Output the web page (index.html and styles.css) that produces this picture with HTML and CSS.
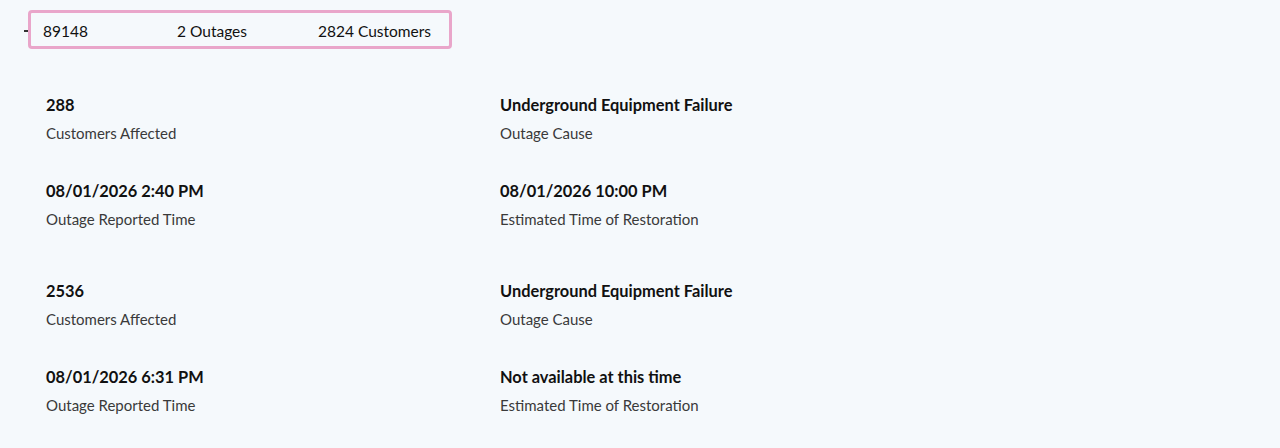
FILE: index.html
```html
<!DOCTYPE html>
<html>
<head>
<meta charset="utf-8">
<link rel="stylesheet" href="styles.css">
</head>
<body>
<div class="page">
  <div class="summary-row">
    <span class="toggle" aria-label="collapse"></span>
    <div class="summary">
      <span class="s-id">89148</span>
      <span class="s-outages">2 Outages</span>
      <span class="s-cust">2824 Customers</span>
    </div>
  </div>
  <div class="outage">
    <div class="grid">
      <div class="item"><div class="val">288</div><div class="lbl">Customers Affected</div></div>
      <div class="item"><div class="val">Underground Equipment Failure</div><div class="lbl">Outage Cause</div></div>
      <div class="item"><div class="val">08/01/2026 2:40 PM</div><div class="lbl">Outage Reported Time</div></div>
      <div class="item"><div class="val">08/01/2026 10:00 PM</div><div class="lbl">Estimated Time of Restoration</div></div>
    </div>
  </div>
  <div class="outage">
    <div class="grid">
      <div class="item"><div class="val">2536</div><div class="lbl">Customers Affected</div></div>
      <div class="item"><div class="val">Underground Equipment Failure</div><div class="lbl">Outage Cause</div></div>
      <div class="item"><div class="val">08/01/2026 6:31 PM</div><div class="lbl">Outage Reported Time</div></div>
      <div class="item"><div class="val">Not available at this time</div><div class="lbl">Estimated Time of Restoration</div></div>
    </div>
  </div>
</div>
</body>
</html>
```
FILE: styles.css
```css
html, body {
  margin: 0;
  padding: 0;
  background: #f5f9fc;
}
body {
  font-family: Lato, "Liberation Sans", sans-serif;
  color: #111;
}
.page {
  padding: 10px 0 0 24px;
}
.summary-row {
  display: flex;
  align-items: center;
}
.toggle {
  width: 4px;
  height: 2px;
  margin-top: 3px;
  background: #333;
}
.summary {
  display: flex;
  align-items: center;
  width: 418px;
  height: 31px;
  padding-top: 2px;
  border: 3px solid #e9a6ca;
  border-radius: 4px;
  font-size: 15.5px;
  color: #111;
}
.s-id { margin-left: 12px; width: 134px; }
.s-outages { width: 141px; }
.outage {
  padding: 46px 0 0 22px;
}
.outage + .outage {
  padding-top: 52px;
}
.grid {
  display: grid;
  grid-template-columns: 454px 454px;
  row-gap: 38px;
}
.val {
  font-weight: 700;
  font-size: 16.4px;
  line-height: 20px;
  color: #111;
}
.lbl {
  margin-top: 8px;
  font-weight: 400;
  font-size: 15px;
  line-height: 20px;
  color: #3a3a3a;
}
```
